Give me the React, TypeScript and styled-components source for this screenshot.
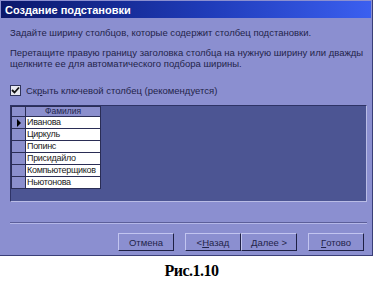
import styled, { createGlobalStyle } from 'styled-components';

const GlobalStyle = createGlobalStyle`
  html, body {
    margin: 0;
    padding: 0;
    background: #ffffff;
  }
`;

const names = [
  'Иванова',
  'Циркуль',
  'Попинс',
  'Присидайло',
  'Компьютерщиков',
  'Ньютонова',
];

const App = (): React.ReactElement => {
  return (
    <Page>
      <GlobalStyle />
      <Window>
        <TitleBar>Создание подстановки</TitleBar>
        <Body>
          <Text>Задайте ширину столбцов, которые содержит столбец подстановки.</Text>
          <Text $top={9}>
            Перетащите правую границу заголовка столбца на нужную ширину или дважды
            <br />
            щелкните ее для автоматического подбора ширины.
          </Text>
          <CheckRow>
            <CheckBox>
              <svg width="9" height="9" viewBox="0 0 9 9">
                <path d="M1 4 L3.5 6.5 L8 1.5" stroke="#111" strokeWidth="1.8" fill="none" />
              </svg>
            </CheckBox>
            <span>
              Ск<u>р</u>ыть ключевой столбец (рекомендуется)
            </span>
          </CheckRow>
          <Grid>
            <Table>
              <thead>
                <tr>
                  <SelectorCell $header />
                  <HeaderCell>Фамилия</HeaderCell>
                </tr>
              </thead>
              <tbody>
                {names.map((name, i) => (
                  <tr key={name}>
                    <SelectorCell>
                      {i === 0 && (
                        <svg width="6" height="8" viewBox="0 0 6 8">
                          <path d="M1 0 L5 4 L1 8 Z" fill="#000" />
                        </svg>
                      )}
                    </SelectorCell>
                    <DataCell>{name}</DataCell>
                  </tr>
                ))}
              </tbody>
            </Table>
          </Grid>
          <Separator />
          <Buttons>
            <Button>Отмена</Button>
            <ButtonPair>
              <Button>
                &lt; <u>Н</u>азад
              </Button>
              <Button>
                <u>Д</u>алее &gt;
              </Button>
            </ButtonPair>
            <Button>
              <u>Г</u>отово
            </Button>
          </Buttons>
        </Body>
      </Window>
      <Caption>Рис.1.10</Caption>
    </Page>
  );
};

export default App;

const Page = styled.div`
  width: 377px;
  height: 290px;
  display: flex;
  flex-direction: column;
`;

const Window = styled.div`
  width: 373px;
  height: 256px;
  background: #8b8fd0;
  border-right: 1px solid #3a3f78;
  border-bottom: 1px solid #3a3f78;
  display: flex;
  flex-direction: column;
  box-sizing: border-box;
  font-family: 'Liberation Sans', Arial, sans-serif;
  font-size: 9.5px;
  color: #23244a;
`;

const TitleBar = styled.div`
  height: 17px;
  margin: 1px 1px 0 1px;
  padding-left: 4px;
  display: flex;
  align-items: center;
  background: linear-gradient(to right, #0b176a 0%, #1f3bb8 55%, #3b5ff0 100%);
  color: #ffffff;
  font-weight: bold;
  font-size: 11px;
`;

const Body = styled.div`
  flex: 1;
  display: flex;
  flex-direction: column;
  padding: 9px 5px 0 10px;
`;

const Text = styled.div<{ $top?: number }>`
  margin-top: ${p => p.$top ?? 0}px;
  line-height: 11px;
  white-space: nowrap;
`;

const CheckRow = styled.div`
  display: flex;
  align-items: center;
  gap: 5px;
  margin-top: 16px;
  line-height: 11px;
`;

const CheckBox = styled.div`
  width: 9px;
  height: 9px;
  background: #e8e8f0;
  border: 1px solid #30335a;
  display: flex;
  align-items: center;
  justify-content: center;
`;

const Grid = styled.div`
  margin-top: 9px;
  height: 97px;
  background: #4c5593;
  border: 1px solid #2e3366;
  border-right-color: #b9bce6;
  border-bottom-color: #b9bce6;
  box-sizing: border-box;
`;

const Table = styled.table`
  border-collapse: collapse;
  table-layout: fixed;
  width: 89px;
  font-size: 9px;
`;

const SelectorCell = styled.td<{ $header?: boolean }>`
  width: 13px;
  height: ${p => (p.$header ? 9 : 11)}px;
  padding: 0;
  background: #8b8fcd;
  border: 1px solid #2a2d55;
  text-align: center;
  vertical-align: middle;
  line-height: 0;
`;

const HeaderCell = styled.th`
  width: 74px;
  height: 9px;
  padding: 0;
  background: #8b8fcd;
  border: 1px solid #2a2d55;
  font-weight: normal;
  font-size: 8.5px;
  line-height: 9px;
  color: #22244a;
`;

const DataCell = styled.td`
  height: 11px;
  padding: 0 0 0 1px;
  background: #ffffff;
  border: 1px solid #2a2d55;
  line-height: 11px;
  color: #222;
  white-space: nowrap;
  overflow: hidden;
  letter-spacing: -0.3px;
`;

const Separator = styled.div`
  margin: 20px 0 0 0;
  height: 0;
  border-top: 1px solid #5c5f9a;
  border-bottom: 1px solid #b4b7e8;
`;

const Buttons = styled.div`
  display: flex;
  justify-content: flex-end;
  gap: 11px;
  margin-top: 9px;
  padding-right: 3px;
`;

const ButtonPair = styled.div`
  display: flex;
`;

const Button = styled.div`
  width: 56px;
  height: 18px;
  box-sizing: border-box;
  display: flex;
  align-items: center;
  justify-content: center;
  background: #8b8fd0;
  border: 1px solid;
  border-color: #c2c5f0 #1e2044 #1e2044 #c2c5f0;
  color: #23244a;
  font-size: 9.5px;
`;

const Caption = styled.div`
  margin-top: 6px;
  text-align: center;
  padding-left: 6px;
  font-family: 'Liberation Serif', 'Times New Roman', serif;
  font-weight: bold;
  font-size: 16px;
  letter-spacing: -0.5px;
  color: #000;
`;
